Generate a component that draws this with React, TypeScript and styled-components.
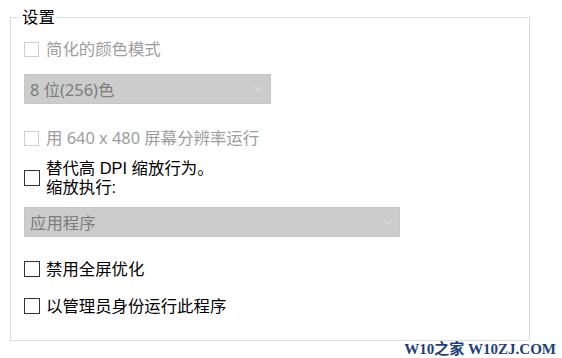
import React from 'react';
import styled, { createGlobalStyle } from 'styled-components';

const GlobalStyle = createGlobalStyle`
  html, body {
    margin: 0;
    padding: 0;
    background: #ffffff;
  }
  body {
    font-family: 'Noto Sans', 'Noto Sans CJK SC', sans-serif;
  }
`;

const Page = styled.div`
  width: 562px;
  height: 358px;
  overflow: hidden;
  display: flex;
  flex-direction: column;
`;

const Group = styled.div`
  position: relative;
  box-sizing: border-box;
  margin: 17px 0 0 10px;
  width: 520px;
  height: 324px;
  border: 1px solid #dcdcdc;
  padding: 0 0 0 13px;
  display: flex;
  flex-direction: column;
`;

const GroupTitle = styled.span`
  position: absolute;
  left: 9px;
  top: -11px;
  padding: 0 2px;
  background: #ffffff;
  font-size: 16.4px;
  line-height: 20px;
  color: #000000;
`;

const Row = styled.label<{ $top: number; $disabled?: boolean }>`
  display: flex;
  align-items: center;
  margin-top: ${({ $top }) => $top}px;
  font-size: 16.4px;
  line-height: 20px;
  color: ${({ $disabled }) => ($disabled ? '#9d9d9d' : '#000000')};
`;

const Box = styled.span<{ $disabled?: boolean }>`
  box-sizing: border-box;
  flex: none;
  width: ${({ $disabled }) => ($disabled ? 15 : 16)}px;
  height: ${({ $disabled }) => ($disabled ? 15 : 16)}px;
  margin-right: ${({ $disabled }) => ($disabled ? 7 : 6)}px;
  border: 1px solid ${({ $disabled }) => ($disabled ? '#cfcfcf' : '#333333')};
  background: #ffffff;
`;

const Lines = styled.span`
  display: flex;
  flex-direction: column;
  gap: 1px;
  font-family: 'Liberation Sans', 'Noto Sans CJK SC', sans-serif;
  line-height: 18px;
`;

const Select = styled.div<{ $top: number; $width: number }>`
  box-sizing: border-box;
  display: flex;
  align-items: center;
  justify-content: space-between;
  margin-top: ${({ $top }) => $top}px;
  width: ${({ $width }) => $width}px;
  height: 30px;
  padding: 0 7px 0 5px;
  background: #cccccc;
  border: 1px solid #c6c6c6;
  font-size: 16.4px;
  color: #7d7d7d;
`;

const Footer = styled.div`
  display: flex;
  justify-content: flex-end;
  padding-right: 6px;
  font-family: 'Liberation Serif', 'Noto Sans CJK SC', serif;
  font-weight: bold;
  font-size: 15px;
  line-height: 16px;
  color: #1e3f7d;
`;

function Chevron(): React.ReactElement {
  return (
    <svg width='9' height='6' viewBox='0 0 9 6'>
      <path d='M0.5 0.8 L4.5 4.8 L8.5 0.8' fill='none' stroke='#e4e4e4' strokeWidth='1' />
    </svg>
  );
}

interface OptionProps {
  top: number;
  disabled?: boolean;
  children: React.ReactNode;
}

function Option({ top, disabled, children }: OptionProps): React.ReactElement {
  return (
    <Row $top={top} $disabled={disabled}>
      <Box $disabled={disabled} />
      {children}
    </Row>
  );
}

export default function App(): React.ReactElement {
  return (
    <Page>
      <GlobalStyle />
      <Group>
        <GroupTitle>设置</GroupTitle>
        <Option top={21} disabled>
          简化的颜色模式
        </Option>
        <Select $top={15} $width={247}>
          <span>8 位(256)色</span>
          <Chevron />
        </Select>
        <Option top={24} disabled>
          用 640 x 480 屏幕分辨率运行
        </Option>
        <Option top={11}>
          <Lines>
            <span>替代高 DPI 缩放行为。</span>
            <span>缩放执行:</span>
          </Lines>
        </Option>
        <Select $top={11} $width={376}>
          <span>应用程序</span>
          <Chevron />
        </Select>
        <Option top={22}>禁用全屏优化</Option>
        <Option top={17}>以管理员身份运行此程序</Option>
      </Group>
      <Footer>W10之家 W10ZJ.COM</Footer>
    </Page>
  );
}
